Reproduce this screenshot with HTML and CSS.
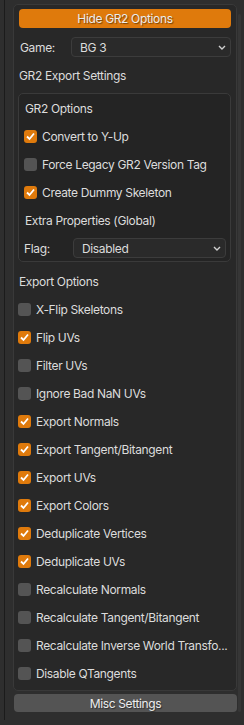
FILE: index.html
```html
<html>

<head>
  <meta name="viewport" content="width=device-width, initial-scale=1.0">
  <link rel="stylesheet" href="styles.css">
</head>

<body>
  <div class="area">
    <div class="panel">
      <div class="btn btn_on">Hide GR2 Options</div>
      <div class="row">
        <span class="label game_label">Game:</span>
        <div class="select">BG 3<svg class="chev" width="8" height="5" viewBox="0 0 8 5"><polyline points="1,1 4,4 7,1" /></svg></div>
      </div>
      <div class="row text_row">GR2 Export Settings</div>

      <div class="box">
        <div class="row text_row">GR2 Options</div>
        <div class="row"><span class="cb on"><svg width="13" height="13" viewBox="0 0 13 13"><polyline points="3,6.5 5.5,9 10,3.5" /></svg></span>Convert to Y-Up</div>
        <div class="row"><span class="cb"></span>Force Legacy GR2 Version Tag</div>
        <div class="row"><span class="cb on"><svg width="13" height="13" viewBox="0 0 13 13"><polyline points="3,6.5 5.5,9 10,3.5" /></svg></span>Create Dummy Skeleton</div>
        <div class="row text_row">Extra Properties (Global)</div>
        <div class="row">
          <span class="label flag_label">Flag:</span>
          <div class="select">Disabled<svg class="chev" width="8" height="5" viewBox="0 0 8 5"><polyline points="1,1 4,4 7,1" /></svg></div>
        </div>
      </div>

      <div class="row text_row after_box">Export Options</div>
      <div class="row"><span class="cb"></span>X-Flip Skeletons</div>
      <div class="row"><span class="cb on"><svg width="13" height="13" viewBox="0 0 13 13"><polyline points="3,6.5 5.5,9 10,3.5" /></svg></span>Flip UVs</div>
      <div class="row"><span class="cb"></span>Filter UVs</div>
      <div class="row"><span class="cb"></span>Ignore Bad NaN UVs</div>
      <div class="row"><span class="cb on"><svg width="13" height="13" viewBox="0 0 13 13"><polyline points="3,6.5 5.5,9 10,3.5" /></svg></span>Export Normals</div>
      <div class="row"><span class="cb on"><svg width="13" height="13" viewBox="0 0 13 13"><polyline points="3,6.5 5.5,9 10,3.5" /></svg></span>Export Tangent/Bitangent</div>
      <div class="row"><span class="cb on"><svg width="13" height="13" viewBox="0 0 13 13"><polyline points="3,6.5 5.5,9 10,3.5" /></svg></span>Export UVs</div>
      <div class="row"><span class="cb on"><svg width="13" height="13" viewBox="0 0 13 13"><polyline points="3,6.5 5.5,9 10,3.5" /></svg></span>Export Colors</div>
      <div class="row"><span class="cb on"><svg width="13" height="13" viewBox="0 0 13 13"><polyline points="3,6.5 5.5,9 10,3.5" /></svg></span>Deduplicate Vertices</div>
      <div class="row"><span class="cb on"><svg width="13" height="13" viewBox="0 0 13 13"><polyline points="3,6.5 5.5,9 10,3.5" /></svg></span>Deduplicate UVs</div>
      <div class="row"><span class="cb"></span>Recalculate Normals</div>
      <div class="row"><span class="cb"></span>Recalculate Tangent/Bitangent</div>
      <div class="row"><span class="cb"></span>Recalculate Inverse World Transfo...</div>
      <div class="row"><span class="cb"></span>Disable QTangents</div>
    </div>
    <div class="btn btn_misc">Misc Settings</div>
    <div class="scroll"></div>
  </div>
</body>

</html>
```

FILE: styles.css
```css
* {
  box-sizing: border-box;
}

body {
  margin: 0;
  padding: 0;
  background-color: #2e2e2e;
  font-family: Inter, "Noto Sans", sans-serif;
  font-size: 12px;
  letter-spacing: -0.35px;
  color: #dcdcdc;
}

.area {
  position: relative;
  margin-left: 4px;
  height: 720px;
  border-left: 1px solid #1b1b1b;
  padding: 4px 7px 0 8px;
}

.panel {
  display: flex;
  flex-direction: column;
  gap: 8px;
  background-color: #282828;
  border: 1px solid #393939;
  border-radius: 5px;
  padding: 4px 5px 7px 4px;
}

.btn {
  display: flex;
  align-items: center;
  justify-content: center;
  border-radius: 4px;
  color: #ececec;
  text-shadow: 1px 1px 1px rgba(0, 0, 0, 0.45);
}

.btn_on {
  height: 19px;
  margin-left: 1px;
  margin-bottom: 1px;
  background-color: #df7a0c;
}

.btn_misc {
  height: 18px;
  margin: 3px 0 0 1px;
  width: 223px;
  background-color: #545454;
}

.row {
  display: flex;
  align-items: center;
  height: 20px;
  white-space: nowrap;
}

.text_row {
  padding-left: 1px;
}

.after_box {
  margin-top: 1px;
}

.label {
  flex: none;
}

.game_label {
  width: 53px;
  padding-left: 2px;
}

.flag_label {
  width: 49px;
}

.select {
  flex: 1;
  display: flex;
  align-items: center;
  justify-content: space-between;
  height: 20px;
  padding: 0 4px 0 8px;
  background-color: #2a2a2a;
  border: 1px solid #3c3c3c;
  border-radius: 4px;
}

.chev polyline {
  fill: none;
  stroke: #d0d0d0;
  stroke-width: 1.4;
}

.box {
  display: flex;
  flex-direction: column;
  gap: 8px;
  background-color: #242424;
  border: 1px solid #3a3a3a;
  border-radius: 5px;
  padding: 4px 4px 3px 5px;
}

.cb {
  flex: none;
  width: 13px;
  height: 13px;
  margin-right: 5px;
  border-radius: 3px;
  background-color: #545454;
}

.cb.on {
  background-color: #df7a0c;
}

.cb svg {
  display: block;
}

.cb polyline {
  fill: none;
  stroke: #ffffff;
  stroke-width: 1.8;
}

.scroll {
  position: absolute;
  top: 14px;
  right: 3px;
  width: 3px;
  height: 698px;
  border-radius: 2px;
  background-color: #363636;
}
```
